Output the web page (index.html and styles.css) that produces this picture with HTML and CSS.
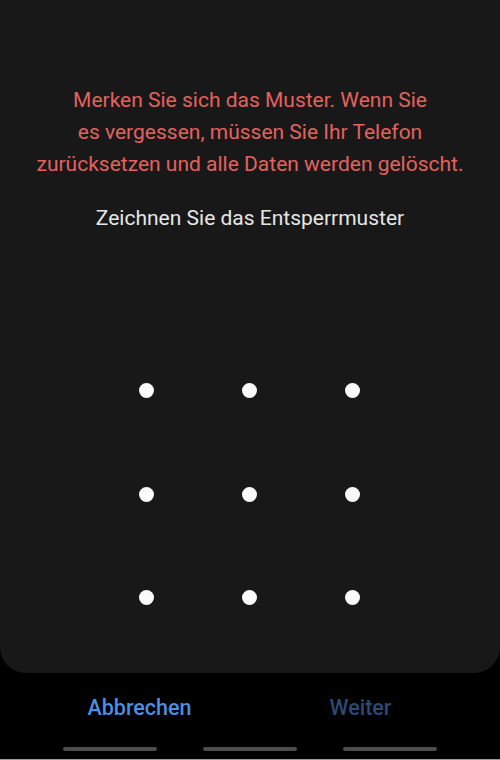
FILE: index.html
```html
<!DOCTYPE html>
<html lang="de">
<head>
<meta charset="utf-8">
<link rel="stylesheet" href="styles.css">
</head>
<body>
<div class="screen">
  <main class="panel">
    <p class="warning">Merken Sie sich das Muster. Wenn Sie<br>es vergessen, müssen Sie Ihr Telefon<br>zurücksetzen und alle Daten werden gelöscht.</p>
    <p class="prompt">Zeichnen Sie das Entsperrmuster</p>
    <div class="grid">
      <span class="dot"></span><span class="dot"></span><span class="dot"></span>
      <span class="dot"></span><span class="dot"></span><span class="dot"></span>
      <span class="dot"></span><span class="dot"></span><span class="dot"></span>
    </div>
  </main>
  <div class="actions">
    <button class="btn btn-cancel">Abbrechen</button>
    <button class="btn btn-next">Weiter</button>
  </div>
  <div class="navbar">
    <span class="bar"></span><span class="bar"></span><span class="bar"></span>
  </div>
</div>
</body>
</html>
```

FILE: styles.css
```css
* { box-sizing: border-box; }
html, body { margin: 0; padding: 0; background: #000; }
body { font-family: Roboto, "Noto Sans", sans-serif; }
.screen {
  width: 500px;
  height: 760px;
  display: flex;
  flex-direction: column;
  background: #000;
  border-bottom: 1px solid #9a9a9a;
}
.panel {
  height: 673px;
  flex: none;
  background: #181818;
  border-radius: 0 0 26px 26px;
  padding-top: 84px;
  display: flex;
  flex-direction: column;
  align-items: center;
}
.warning {
  margin: 0;
  color: #e5615f;
  font-size: 21px;
  line-height: 32px;
  text-align: center;
  white-space: nowrap;
}
.prompt {
  margin: 22px 0 0;
  color: #e6e6e6;
  font-size: 21px;
  line-height: 32px;
  text-align: center;
}
.grid {
  margin-top: 105px;
  margin-left: -1px;
  display: grid;
  grid-template-columns: repeat(3, 103px);
  grid-auto-rows: 103.5px;
  justify-items: center;
  align-items: center;
}
.dot {
  width: 15px;
  height: 15px;
  border-radius: 50%;
  background: #fafafa;
}
.actions {
  display: grid;
  grid-template-columns: 1fr 1fr;
  padding: 0 29px;
  margin-top: 20px;
}
.btn {
  background: none;
  border: 0;
  padding: 0;
  font-family: Roboto, "Noto Sans", sans-serif;
  font-size: 21.5px;
  font-weight: 500;
  line-height: 30px;
  text-align: center;
}
.btn-cancel { color: #4b8fe3; }
.btn-next { color: #2b4a74; }
.navbar {
  margin-top: 24px;
  display: flex;
  justify-content: center;
  gap: 46px;
}
.bar {
  width: 94px;
  height: 4px;
  border-radius: 2px;
  background: #4d4d4d;
}
```
